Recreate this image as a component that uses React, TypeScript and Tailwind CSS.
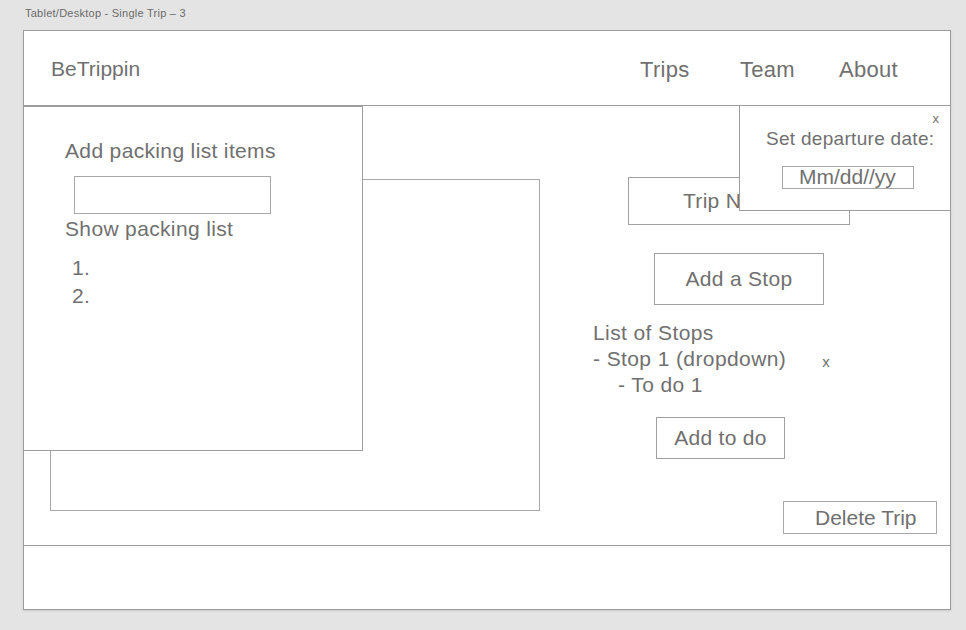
export default function App() {
  const font = "font-['Liberation_Sans',Arial,sans-serif]";

  return (
    <div className={`w-[966px] h-[630px] bg-[#e4e4e4] text-[#707070] ${font}`}>
      {/* artboard label */}
      <div className="h-[30px] pl-[25px] pt-[7px] text-[11px] leading-[13px] tracking-[0.25px] text-[#6b6b6b]">
        Tablet/Desktop - Single Trip – 3
      </div>

      <div className="ml-[23px] w-[928px] bg-white shadow-[0_1px_2px_rgba(0,0,0,0.12)]">
        {/* Header */}
        <div className="h-[76px] border border-[#9d9d9d] flex items-center pl-[27px] pt-[2px]">
          <span className="text-[21px]">BeTrippin</span>
          <div className="ml-auto w-[310px] flex text-[22px] tracking-[0.3px]">
            <span className="w-[100px]">Trips</span>
            <span className="w-[99px]">Team</span>
            <span>About</span>
          </div>
        </div>

        {/* Main */}
        <div className="relative h-[439px] border-x border-[#9d9d9d] flex">
          {/* big canvas box */}
          <div className="ml-[26px] mt-[73px] w-[490px] h-[332px] border border-[#a8a8a8]" />

          {/* right column */}
          <div className="ml-[53px] flex flex-col items-start">
            <div className="ml-[35px] mt-[71px] w-[222px] h-[48px] border border-[#a0a0a0] flex items-center justify-center pr-[12px] text-[21px] tracking-[0.3px]">
              Trip Name
            </div>
            <div className="ml-[61px] mt-[28px] w-[170px] h-[52px] border border-[#a0a0a0] flex items-center justify-center text-[21px] tracking-[0.3px]">
              Add a Stop
            </div>
            <div className="mt-[15px] text-[21px] leading-[26px] tracking-[0.4px]">
              <div>List of Stops</div>
              <div className="flex items-center">
                <span>- Stop 1 (dropdown)</span>
                <span className="ml-[36px] mt-[4px] text-[15px] leading-[15px]">x</span>
              </div>
              <div className="pl-[25px]">- To do 1</div>
            </div>
            <div className="ml-[63px] mt-[19px] w-[129px] h-[42px] border border-[#a0a0a0] flex items-center justify-center text-[21px] tracking-[0.3px]">
              Add to do
            </div>
            <div className="ml-[190px] mt-[42px] w-[154px] h-[33px] border border-[#a8a8a8] flex items-center pl-[31px] text-[21px]">
              Delete Trip
            </div>
          </div>

          {/* packing list panel */}
          <div className="absolute left-[-1px] top-0 w-[340px] h-[345px] bg-white border border-[#9d9d9d] pl-[41px] pt-[30px] text-[21px] leading-[28px] tracking-[0.35px]">
            <div>Add packing list items</div>
            <div className="ml-[9px] mt-[11px] w-[197px] h-[38px] border border-[#a8a8a8]" />
            <div className="mt-[1px]">Show packing list</div>
            <ol className="mt-[11px] pl-[7px]">
              <li>1.</li>
              <li>2.</li>
            </ol>
          </div>

          {/* departure date popup */}
          <div className="absolute right-[-1px] top-[-1px] w-[212px] h-[106px] bg-white border border-[#9d9d9d]">
            <div className="flex justify-end pr-[11px] pt-[6px] text-[13px] leading-[13px]">x</div>
            <div className="pl-[26px] mt-[3px] text-[19px] leading-[22px] tracking-[0.3px]">Set departure date:</div>
            <div className="ml-[42px] mt-[16px] w-[132px] h-[23px] border border-[#a8a8a8] flex items-center pl-[16px] text-[21px] leading-[20px] pb-[2px]">
              Mm/dd//yy
            </div>
          </div>
        </div>

        {/* Footer */}
        <div className="h-[65px] border border-[#9d9d9d]" />
      </div>
    </div>
  );
}
